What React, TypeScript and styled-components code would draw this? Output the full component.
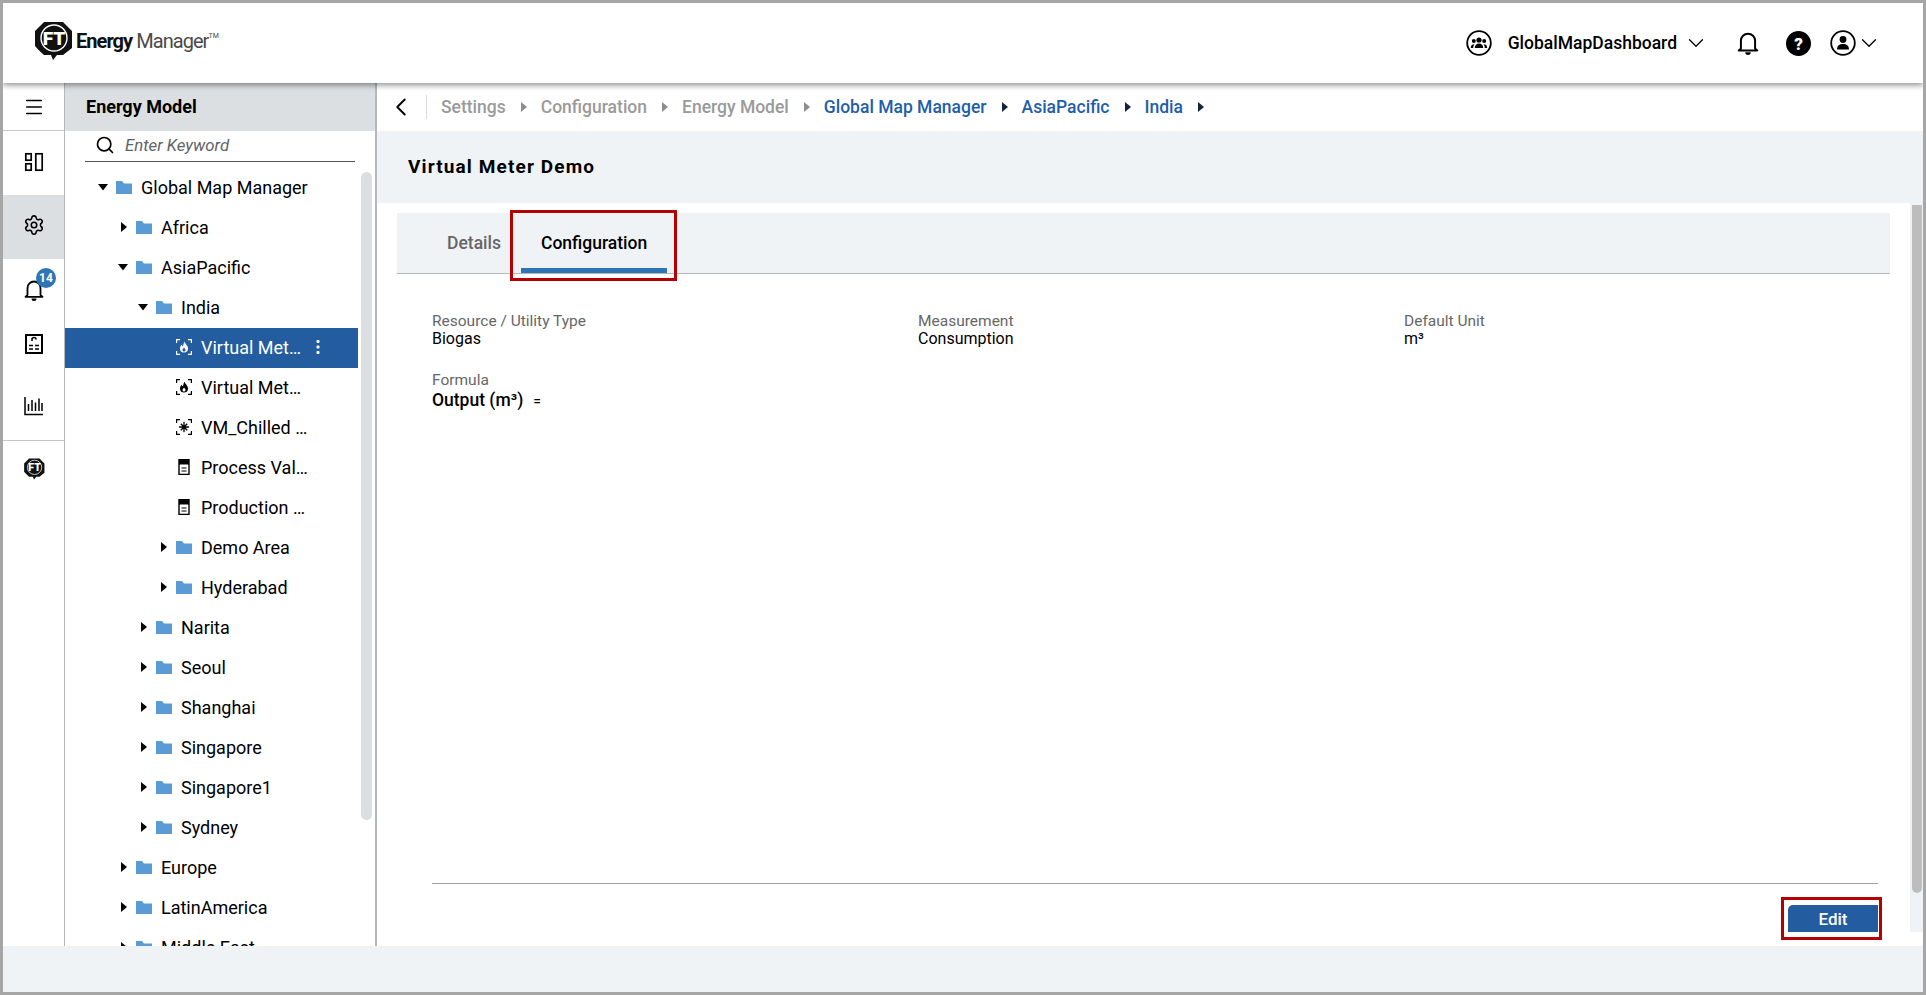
import React from "react";
import styled, { createGlobalStyle } from "styled-components";
import { Settings, Search, ChevronDown, ChevronLeft, Menu } from "lucide-react";

const GlobalStyle = createGlobalStyle`
  html, body { margin: 0; padding: 0; background: #fff; }
  * { box-sizing: border-box; }
  body { font-family: Roboto, "Liberation Sans", sans-serif; color: #000; }
`;

const Frame = styled.div`
  width: 1926px;
  height: 995px;
  border: 3px solid #a6a6a6;
  display: flex;
  flex-direction: column;
  overflow: hidden;
  background: #fff;
`;

const Header = styled.header`
  height: 80px;
  flex: none;
  display: flex;
  align-items: center;
  justify-content: space-between;
  padding: 0 41px 0 30px;
  background: #fff;
  box-shadow: 0 2px 6px rgba(0, 0, 0, 0.45);
  position: relative;
  z-index: 2;
`;

const Logo = styled.div`
  display: flex;
  align-items: center;
  gap: 3px;
  margin-top: -4px;
`;

const LogoText = styled.span`
  font-size: 20px;
  letter-spacing: -0.95px;
  color: #4a4a4a;
  b { font-weight: 700; color: #111; }
  sup { font-size: 7px; vertical-align: 10px; letter-spacing: 0; }
`;

const HeaderRight = styled.div`
  display: flex;
  align-items: center;
`;

const DashName = styled.span`
  font-size: 17.5px;
  font-weight: 500;
  margin: 0 6px 0 16px;
`;

const Gap = styled.span<{ $w: number }>`
  display: inline-block;
  width: ${(p) => p.$w}px;
`;

const Body = styled.div`
  flex: 1;
  min-height: 0;
  display: flex;
`;

const Rail = styled.nav`
  width: 62px;
  flex: none;
  border-right: 1px solid #b4b7bb;
  display: flex;
  flex-direction: column;
`;

const RailItem = styled.div<{ $h: number; $active?: boolean; $line?: boolean; $nudge?: number }>`
  height: ${(p) => p.$h}px;
  flex: none;
  display: flex;
  align-items: center;
  justify-content: center;
  position: relative;
  background: ${(p) => (p.$active ? "#dcdfe2" : "transparent")};
  border-bottom: ${(p) => (p.$line ? "1px solid #c4c7ca" : "none")};
  padding-top: ${(p) => Math.max(p.$nudge ?? 0, 0)}px;
  padding-bottom: ${(p) => Math.max(-(p.$nudge ?? 0), 0)}px;
`;

const Badge = styled.span`
  position: absolute;
  left: 33px;
  top: 9px;
  width: 20px;
  height: 20px;
  border-radius: 50%;
  background: #2e75b6;
  color: #fff;
  font-size: 12px;
  font-weight: 700;
  display: flex;
  align-items: center;
  justify-content: center;
`;

const TreePanel = styled.aside`
  width: 312px;
  flex: none;
  border-right: 2px solid #b4b7bb;
  display: flex;
  flex-direction: column;
  position: relative;
  overflow: hidden;
`;

const PanelTitle = styled.div`
  height: 48px;
  flex: none;
  background: #dcdfe2;
  display: flex;
  align-items: center;
  padding: 0 0 2px 21px;
  font-size: 18px;
  font-weight: 700;
`;

const SearchRow = styled.div`
  height: 31px;
  flex: none;
  margin: 0 20px;
  width: 270px;
  border-bottom: 1px solid #555;
  display: flex;
  align-items: center;
  gap: 10px;
  padding: 0 0 2px 10px;
  font-size: 16.8px;
  font-style: italic;
  color: #5f6368;
`;

const TreeList = styled.ul`
  list-style: none;
  margin: 6px 0 0;
  padding: 0;
  width: 293px;
`;

const TreeRow = styled.li<{ $level: number; $selected?: boolean }>`
  height: 40px;
  display: flex;
  align-items: center;
  padding: 0 0 2px ${(p) => 33 + p.$level * 20}px;
  font-size: 18px;
  white-space: nowrap;
  background: ${(p) => (p.$selected ? "#235c9f" : "transparent")};
  color: ${(p) => (p.$selected ? "#fff" : "#000")};
`;

const Caret = styled.span<{ $open?: boolean }>`
  width: 18px;
  flex: none;
  display: flex;
  align-items: center;
  padding-left: ${(p) => (p.$open ? 0 : 2)}px;
`;

const NodeIcon = styled.span`
  width: 16px;
  flex: none;
  display: flex;
  justify-content: center;
  margin-right: 9px;
`;

const Kebab = styled.span`
  margin: 0 38px 0 auto;
  display: flex;
`;

const TreeThumb = styled.div`
  position: absolute;
  left: 296px;
  top: 89px;
  width: 11px;
  height: 648px;
  border-radius: 6px;
  background: #dcdfe2;
`;

const Main = styled.main`
  flex: 1;
  min-width: 0;
  display: flex;
  flex-direction: column;
`;

const Crumbs = styled.div`
  height: 48px;
  flex: none;
  display: flex;
  align-items: center;
  padding-left: 9px;
  font-size: 17.5px;
  font-weight: 500;
`;

const BackDivider = styled.span`
  width: 1px;
  height: 24px;
  background: #d9dcdf;
  margin: 0 14px 0 10px;
`;

const Crumb = styled.span<{ $link?: boolean }>`
  color: ${(p) => (p.$link ? "#1f5ea8" : "#9a9a9a")};
`;

const CrumbArrow = styled.span<{ $link?: boolean }>`
  width: 0;
  height: 0;
  border-left: 6px solid ${(p) => (p.$link ? "#10243c" : "#8d8d8d")};
  border-top: 5px solid transparent;
  border-bottom: 5px solid transparent;
  margin: 0 14px 0 15px;
`;

const TitleBand = styled.div`
  height: 72px;
  flex: none;
  background: #f0f3f6;
  display: flex;
  align-items: center;
  padding: 0 0 2px 31px;
  font-size: 19px;
  font-weight: 700;
  letter-spacing: 1.12px;
`;

const Workspace = styled.div`
  flex: 1;
  min-height: 0;
  display: flex;
`;

const Content = styled.div`
  flex: 1;
  min-width: 0;
  padding: 10px 20px 0;
  display: flex;
  flex-direction: column;
`;

const TabBar = styled.div`
  height: 61px;
  flex: none;
  background: #f0f3f6;
  border-bottom: 1px solid #b4b7bb;
  display: flex;
  padding-left: 30px;
`;

const Tab = styled.div<{ $active?: boolean }>`
  padding: 0 20px;
  display: flex;
  align-items: center;
  height: 60px;
  font-size: 17.5px;
  font-weight: 500;
  color: ${(p) => (p.$active ? "#000" : "#666")};
  position: relative;
  ${(p) =>
    p.$active
      ? `&::after {
          content: "";
          position: absolute;
          left: 0;
          right: 0;
          bottom: 0;
          height: 5px;
          background: #2e75b6;
        }`
      : ""}
`;

const Highlight = styled.span<{ $t: number; $r: number; $b: number; $l: number }>`
  position: absolute;
  top: ${(p) => p.$t}px;
  right: ${(p) => p.$r}px;
  bottom: ${(p) => p.$b}px;
  left: ${(p) => p.$l}px;
  border: 3px solid #b30000;
  pointer-events: none;
  z-index: 1;
`;

const Panel = styled.div`
  flex: 1;
  min-height: 0;
  padding: 39px 12px 0 35px;
  display: flex;
  flex-direction: column;
`;

const FieldGrid = styled.div`
  display: grid;
  grid-template-columns: 486px 486px 1fr;
`;

const Field = styled.div`
  display: flex;
  flex-direction: column;
`;

const FieldLabel = styled.span`
  font-size: 15.5px;
  line-height: 17px;
  color: #666;
`;

const FieldValue = styled.span`
  font-size: 16px;
  line-height: 18px;
`;

const Formula = styled.div`
  margin-top: 24px;
  display: flex;
  flex-direction: column;
  flex: 1;
`;

const FormulaValue = styled.div`
  font-size: 17.5px;
  font-weight: 500;
  line-height: 22px;
  span { font-weight: 400; font-size: 14px; margin-left: 10px; }
`;

const Actions = styled.div`
  border-top: 1px solid #a0a0a0;
  height: 63px;
  flex: none;
  display: flex;
  justify-content: flex-end;
  padding-top: 21px;
`;

const EditButton = styled.button`
  width: 90px;
  height: 27px;
  border: none;
  border-radius: 5px 0 0 0;
  background: #235c9f;
  color: #fff;
  font: 500 17px Roboto, sans-serif;
  padding: 0;
  position: relative;
`;

const ScrollTrack = styled.div`
  width: 13px;
  height: 729px;
  flex: none;
  background: #f0f3f6;
  padding: 2px 1px 0 2px;
`;

const ScrollThumb = styled.div`
  height: 688px;
  border-radius: 0 0 5px 5px;
  background: #bdbdbd;
`;

const Footer = styled.footer`
  height: 46px;
  flex: none;
  background: #f0f3f6;
  position: relative;
  z-index: 1;
`;

const FtMark = ({ size }: { size: number }) => (
  <svg width={size} height={size} viewBox="0 0 40 40">
    <path d="M11 1h19l9 9v17l-9 7h-6l-4 5-2-5h-7l-9-8V10z" fill="#111" />
    <path d="M8 1 1 8v17l6 7" fill="none" stroke="#fff" strokeWidth="1.6" />
    <circle cx="21" cy="17" r="13" fill="none" stroke="#fff" strokeWidth="1.4" />
    <text x="21" y="24" textAnchor="middle" fontSize="19" fontWeight="900" fill="#fff" fontFamily="Roboto, sans-serif">FT</text>
  </svg>
);

const Folder = () => (
  <svg width="16" height="14" viewBox="0 0 16 14">
    <path d="M0 1h6l2 2.500h8V14H0z" fill="#5b9bd5" />
  </svg>
);

const Triangle = ({ open }: { open: boolean }) =>
  open ? (
    <svg width="11" height="8" viewBox="0 0 11 8">
      <path d="M0 1h10L5 7.500z" fill="#000" />
    </svg>
  ) : (
    <svg width="8" height="11" viewBox="0 0 8 11">
      <path d="M1 0v10l6-5z" fill="#000" />
    </svg>
  );

const MeterFrame = ({ children }: { children: React.ReactNode }) => (
  <svg width="16" height="16" viewBox="0 0 16 16" fill="none" stroke="currentColor" strokeWidth="1.2">
    <path d="M.6 4V.6H4M12 .6h3.400V4M15.400 12v3.400H12M4 15.400H.6V12" />
    {children}
  </svg>
);

const Flame = () => (
  <MeterFrame>
    <path
      fillRule="evenodd"
      d="M8.300 2.500c.4 2.200 3.700 3.800 3.700 7a4 4 0 0 1-8 0C4 7.800 5 6.800 5.600 5.500c.3 1 .8 1.500 1.300 1.700.5-1.500.8-3 1.400-4.700zM8 8.500C7.400 9.600 6.500 10 6.500 11a1.500 1.500 0 0 0 3 0c0-1-.9-1.400-1.500-2.500z"
      fill="currentColor"
      stroke="none"
    />
  </MeterFrame>
);

const Snow = () => (
  <MeterFrame>
    <path d="M8 2.800v10.400M3 8h10M4.800 4.800l6.400 6.400M11.200 4.800l-6.400 6.400" strokeWidth="1.300" />
    <circle cx="8" cy="8" r="2" fill="currentColor" stroke="none" />
  </MeterFrame>
);

const Calc = () => (
  <svg width="12" height="16" viewBox="0 0 12 16">
    <path d="M1 .5h10v15H1z" fill="#fff" stroke="#000" strokeWidth="1.400" />
    <path d="M1 .5h10v5H1z" fill="#000" />
    <path d="M3.500 9h5M3.500 12h5" stroke="#000" strokeWidth="1.200" />
  </svg>
);

const DashIcon = () => (
  <svg width="20" height="20" viewBox="0 0 20 20" fill="none" stroke="#000" strokeWidth="1.700">
    <rect x="1.800" y="1.800" width="5.400" height="6.400" />
    <rect x="1.800" y="11.800" width="5.400" height="6.400" />
    <rect x="11.800" y="1.800" width="6.400" height="16.400" />
  </svg>
);

const BellIcon = ({ size }: { size: number }) => (
  <svg width={size} height={size} viewBox="0 0 20 22" fill="none" stroke="#000" strokeWidth="1.800">
    <path d="M3.500 16V9a6.500 6.500 0 0 1 13 0v7l2 1.800H1.500z" strokeLinejoin="round" />
    <path d="M7.500 19.500a2.500 2.500 0 0 0 5 0z" fill="#000" stroke="none" />
  </svg>
);

const ReportIcon = () => (
  <svg width="18" height="20" viewBox="0 0 18 20" fill="none" stroke="#000" strokeWidth="2">
    <rect x="1" y="1" width="16" height="18" />
    <path d="M7 7V5.500a2 2 0 0 1 4 0M4 11.500h4M10 11.500h4M4 15h4M10 15h4" strokeWidth="1.600" />
  </svg>
);

const ChartIcon = () => (
  <svg width="20" height="20" viewBox="0 0 20 20" fill="none" stroke="#000" strokeWidth="1.500">
    <path d="M1 1v17.500h18M4.500 15V8M8 15V4M11.500 15V6.500M15 15V2.500M18 15V7" />
  </svg>
);

const GroupIcon = () => (
  <svg width="26" height="26" viewBox="0 0 26 26">
    <circle cx="13" cy="13" r="11.800" fill="none" stroke="#000" strokeWidth="1.800" />
    <circle cx="13" cy="10" r="2.600" />
    <circle cx="7.800" cy="11" r="2" />
    <circle cx="18.200" cy="11" r="2" />
    <path d="M8.800 18c0-3 1.800-4.600 4.200-4.600s4.200 1.600 4.200 4.600zM4.800 18c0-2.400 1-3.800 3.600-3.800-.8 1-1.200 2.300-1.200 3.800zM21.200 18c0-2.400-1-3.800-3.600-3.800.8 1 1.200 2.300 1.200 3.800z" />
  </svg>
);

const HelpIcon = () => (
  <svg width="25" height="25" viewBox="0 0 25 25">
    <circle cx="12.500" cy="12.500" r="12.500" fill="#000" />
    <text x="12.500" y="18.500" textAnchor="middle" fontSize="17" fontWeight="900" fill="#fff" fontFamily="Roboto, sans-serif">?</text>
  </svg>
);

const UserIcon = () => (
  <svg width="26" height="26" viewBox="0 0 26 26">
    <circle cx="13" cy="13" r="11.800" fill="none" stroke="#000" strokeWidth="1.800" />
    <circle cx="13" cy="9.500" r="3.400" />
    <path d="M7 19.500c0-3.800 2.600-5.500 6-5.500s6 1.700 6 5.500z" />
  </svg>
);

const Kebabs = () => (
  <svg width="4" height="14" viewBox="0 0 4 14" fill="#fff">
    <rect x=".5" width="3" height="3" rx="1" />
    <rect x=".5" y="5.500" width="3" height="3" rx="1" />
    <rect x=".5" y="11" width="3" height="3" rx="1" />
  </svg>
);

type NodeKind = "folder" | "flame" | "snow" | "calc";
type Node = { id: string; level: number; label: string; open?: boolean; kind?: NodeKind; selected?: boolean };

const tree: Node[] = [
  { id: "root", level: 0, label: "Global Map Manager", open: true },
  { id: "africa", level: 1, label: "Africa", open: false },
  { id: "apac", level: 1, label: "AsiaPacific", open: true },
  { id: "india", level: 2, label: "India", open: true },
  { id: "vm1", level: 3, label: "Virtual Met…", kind: "flame", selected: true },
  { id: "vm2", level: 3, label: "Virtual Met…", kind: "flame" },
  { id: "vm3", level: 3, label: "VM_Chilled …", kind: "snow" },
  { id: "pv", level: 3, label: "Process Val…", kind: "calc" },
  { id: "prod", level: 3, label: "Production …", kind: "calc" },
  { id: "demo", level: 3, label: "Demo Area", open: false },
  { id: "hyd", level: 3, label: "Hyderabad", open: false },
  { id: "narita", level: 2, label: "Narita", open: false },
  { id: "seoul", level: 2, label: "Seoul", open: false },
  { id: "shanghai", level: 2, label: "Shanghai", open: false },
  { id: "sg", level: 2, label: "Singapore", open: false },
  { id: "sg1", level: 2, label: "Singapore1", open: false },
  { id: "sydney", level: 2, label: "Sydney", open: false },
  { id: "europe", level: 1, label: "Europe", open: false },
  { id: "latam", level: 1, label: "LatinAmerica", open: false },
  { id: "me", level: 1, label: "Middle East", open: false },
];

const icons: Record<NodeKind, React.ReactNode> = {
  folder: <Folder />,
  flame: <Flame />,
  snow: <Snow />,
  calc: <Calc />,
};

export default function App() {
  const grey = ["Settings", "Configuration", "Energy Model"];
  const blue = ["Global Map Manager", "AsiaPacific", "India"];
  return (
    <>
      <GlobalStyle />
      <Frame>
        <Header>
          <Logo>
            <FtMark size={40} />
            <LogoText>
              <b>Energy</b> Manager<sup>TM</sup>
            </LogoText>
          </Logo>
          <HeaderRight>
            <GroupIcon />
            <DashName>GlobalMapDashboard</DashName>
            <ChevronDown size={26} strokeWidth={1.2} />
            <Gap $w={27} />
            <BellIcon size={24} />
            <Gap $w={26} />
            <HelpIcon />
            <Gap $w={19} />
            <UserIcon />
            <ChevronDown size={26} strokeWidth={1.2} />
          </HeaderRight>
        </Header>
        <Body>
          <Rail>
            <RailItem $h={48} $line>
              <Menu size={22} strokeWidth={1.6} />
            </RailItem>
            <RailItem $h={64} $nudge={-2}>
              <DashIcon />
            </RailItem>
            <RailItem $h={64} $active $nudge={-4}>
              <Settings size={22} strokeWidth={1.7} />
            </RailItem>
            <RailItem $h={62}>
              <BellIcon size={22} />
              <Badge>14</Badge>
            </RailItem>
            <RailItem $h={46}>
              <ReportIcon />
            </RailItem>
            <RailItem $h={74} $line $nudge={4}>
              <ChartIcon />
            </RailItem>
            <RailItem $h={56}>
              <FtMark size={22} />
            </RailItem>
          </Rail>
          <TreePanel>
            <PanelTitle>Energy Model</PanelTitle>
            <SearchRow>
              <Search size={20} strokeWidth={2} color="#000" />
              Enter Keyword
            </SearchRow>
            <TreeList>
              {tree.map((n) => (
                <TreeRow key={n.id} $level={n.level} $selected={n.selected}>
                  <Caret $open={n.open}>{n.open !== undefined && <Triangle open={n.open} />}</Caret>
                  <NodeIcon>{icons[n.kind ?? "folder"]}</NodeIcon>
                  {n.label}
                  {n.selected && (
                    <Kebab>
                      <Kebabs />
                    </Kebab>
                  )}
                </TreeRow>
              ))}
            </TreeList>
            <TreeThumb />
          </TreePanel>
          <Main>
            <Crumbs>
              <ChevronLeft size={30} strokeWidth={1.5} />
              <BackDivider />
              {grey.map((c) => (
                <React.Fragment key={c}>
                  <Crumb>{c}</Crumb>
                  <CrumbArrow />
                </React.Fragment>
              ))}
              {blue.map((c) => (
                <React.Fragment key={c}>
                  <Crumb $link>{c}</Crumb>
                  <CrumbArrow $link />
                </React.Fragment>
              ))}
            </Crumbs>
            <TitleBand>Virtual Meter Demo</TitleBand>
            <Workspace>
              <Content>
                <TabBar>
                  <Tab>Details</Tab>
                  <Tab $active>
                    Configuration
                    <Highlight $t={-3} $r={-10} $b={-8} $l={-11} />
                  </Tab>
                </TabBar>
                <Panel>
                  <FieldGrid>
                    <Field>
                      <FieldLabel>Resource / Utility Type</FieldLabel>
                      <FieldValue>Biogas</FieldValue>
                    </Field>
                    <Field>
                      <FieldLabel>Measurement</FieldLabel>
                      <FieldValue>Consumption</FieldValue>
                    </Field>
                    <Field>
                      <FieldLabel>Default Unit</FieldLabel>
                      <FieldValue>m³</FieldValue>
                    </Field>
                  </FieldGrid>
                  <Formula>
                    <FieldLabel>Formula</FieldLabel>
                    <FormulaValue>
                      Output (m³)<span>=</span>
                    </FormulaValue>
                  </Formula>
                  <Actions>
                    <EditButton>
                      Edit
                      <Highlight $t={-8} $r={-4} $b={-8} $l={-7} />
                    </EditButton>
                  </Actions>
                </Panel>
              </Content>
              <ScrollTrack>
                <ScrollThumb />
              </ScrollTrack>
            </Workspace>
          </Main>
        </Body>
        <Footer />
      </Frame>
    </>
  );
}
